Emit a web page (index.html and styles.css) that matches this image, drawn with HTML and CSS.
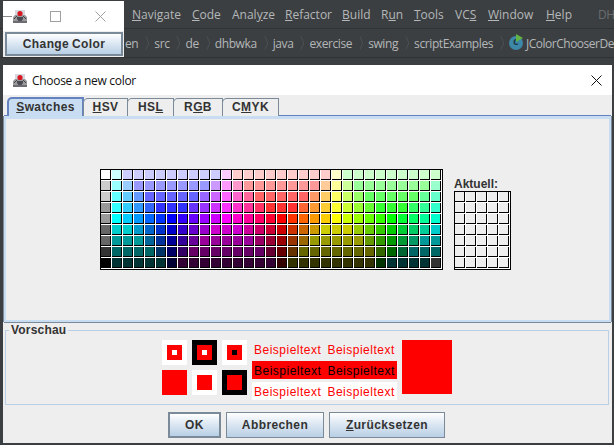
FILE: index.html
```html
<!DOCTYPE html>
<html lang="de">
<head>
    <meta charset="UTF-8">
    <meta name="viewport" content="width=device-width, initial-scale=1.0">
    <title>Choose a new color</title>
    <link rel="stylesheet" href="styles.css">
</head>
<body>

    <!-- IDE behind the windows -->
    <div class="ide">
        <div class="menubar">
            <span class="menu m-navigate"><u>N</u>avigate</span>
            <span class="menu m-code"><u>C</u>ode</span>
            <span class="menu m-analyze">Anal<u>y</u>ze</span>
            <span class="menu m-refactor"><u>R</u>efactor</span>
            <span class="menu m-build"><u>B</u>uild</span>
            <span class="menu m-run">R<u>u</u>n</span>
            <span class="menu m-tools"><u>T</u>ools</span>
            <span class="menu m-vcs">VC<u>S</u></span>
            <span class="menu m-window"><u>W</u>indow</span>
            <span class="menu m-help"><u>H</u>elp</span>
            <span class="menu project">DH</span>
        </div>
        <div class="crumbs">
            <span class="crumb">en</span><span class="chev"></span>
            <span class="crumb">src</span><span class="chev"></span>
            <span class="crumb">de</span><span class="chev"></span>
            <span class="crumb">dhbwka</span><span class="chev"></span>
            <span class="crumb">java</span><span class="chev"></span>
            <span class="crumb">exercise</span><span class="chev"></span>
            <span class="crumb">swing</span><span class="chev"></span>
            <span class="crumb">scriptExamples</span><span class="chev"></span>
            <span class="class-icon"><span class="class-letter">c</span><span class="class-run"></span></span>
            <span class="crumb class-name">JColorChooserDe</span>
        </div>
    </div>

    <!-- small demo window -->
    <div class="window small-window">
        <div class="titlebar small-title">
            <span class="min-line"></span>
            <svg class="java-icon" viewBox="0 0 16 16"><use href="#duke"/></svg>
            <span class="max-box"></span>
            <svg class="close-x gray" viewBox="0 0 11 11"><path d="M0.5 0.5L10.5 10.5M10.5 0.5L0.5 10.5"/></svg>
        </div>
        <div class="small-body">
            <button class="btn change-btn" type="button">Change Color</button>
        </div>
    </div>

    <!-- color chooser dialog -->
    <div class="window dialog">
        <div class="titlebar dialog-title">
            <svg class="java-icon" viewBox="0 0 16 16">
                <g id="duke">
                    <path d="M1 9L4 6H12L15 9V15H1Z" fill="#9a9a9a"/>
                    <path d="M3 2H13V7H3Z" fill="#d8d8e0"/>
                    <path d="M5 9H11V11L9.5 13H6.5L5 11Z" fill="#4a4a52"/>
                    <path d="M1 13H15V15H1Z" fill="#6c6c74"/>
                    <path d="M2 11L5 8M14 11L11 8" stroke="#44444c" fill="none"/>
                    <circle cx="8" cy="5.5" r="2.6" fill="#d81820"/>
                </g>
            </svg>
            <span class="dialog-name">Choose a new color</span>
            <svg class="close-x" viewBox="0 0 11 11"><path d="M0.5 0.5L10.5 10.5M10.5 0.5L0.5 10.5"/></svg>
        </div>

        <div class="tabs">
            <span class="tab active"><u>S</u>watches</span>
            <span class="tab t-hsv"><u>H</u>SV</span>
            <span class="tab t-hsl">HS<u>L</u></span>
            <span class="tab t-rgb">R<u>G</u>B</span>
            <span class="tab t-cmyk">C<u>M</u>YK</span>
        </div>

        <div class="tab-panel">
            <div class="swatch-grid" id="main-swatches"></div>
            <div class="recent">
                <div class="recent-label">Aktuell:</div>
                <div class="swatch-grid recent-grid" id="recent-swatches"></div>
            </div>
        </div>

        <fieldset class="preview">
            <legend>Vorschau</legend>
            <div class="chips">
                <span class="chip white"><span class="ring"><span class="dot white"></span></span></span>
                <span class="chip black"><span class="ring"><span class="dot white"></span></span></span>
                <span class="chip white"><span class="ring"><span class="dot black"></span></span></span>
                <span class="chip red"></span>
                <span class="chip white"><span class="ring"></span></span>
                <span class="chip black"><span class="ring"></span></span>
            </div>
            <div class="samples">
                <div class="sample"><span>Beispieltext</span><span>Beispieltext</span></div>
                <div class="sample on-red"><span>Beispieltext</span><span>Beispieltext</span></div>
                <div class="sample on-white"><span>Beispieltext</span><span>Beispieltext</span></div>
            </div>
            <div class="big-red"></div>
        </fieldset>

        <div class="actions">
            <button class="btn ok-btn" type="button">OK</button>
            <button class="btn cancel-btn" type="button">Abbrechen</button>
            <button class="btn reset-btn" type="button"><u>Z</u>urücksetzen</button>
        </div>
    </div>

    <script src="script.js"></script>
</body>
</html>
```

FILE: styles.css
```css
body {
    margin: 0;
    width: 614px;
    height: 445px;
    overflow: hidden;
    position: relative;
    background-color: #3c3f41;
    font-family: "Liberation Sans", Arial, sans-serif;
}

/* IDE */
.menubar {
    height: 28px;
    position: relative;
    border-bottom: 1px solid #323232;
}

.menu {
    position: absolute;
    top: 6px;
    font-family: "Open Sans", sans-serif;
    font-size: 12px;
    line-height: 18px;
    color: #b4b7b9;
}

.m-navigate { left: 132px; }
.m-code { left: 192px; }
.m-analyze { left: 232px; }
.m-refactor { left: 285px; }
.m-build { left: 342px; }
.m-run { left: 381px; }
.m-tools { left: 414px; }
.m-vcs { left: 455px; }
.m-window { left: 488px; }
.m-help { left: 546px; }
.project { left: 598px; color: #6a6d70; letter-spacing: -0.5px; }

.crumbs {
    height: 28px;
    display: flex;
    align-items: center;
    padding-left: 125px;
    border-bottom: 1px solid #323232;
    font-family: "Open Sans", sans-serif;
    font-size: 12px;
    letter-spacing: -0.4px;
    color: #b4b7b9;
    white-space: nowrap;
}

.chev {
    width: 10px;
    height: 10px;
    box-sizing: border-box;
    margin: 0 3px;
    border-top: 1px solid #55585a;
    border-right: 1px solid #55585a;
    transform: scaleX(0.45) rotate(45deg);
    flex: none;
}

.class-icon {
    width: 14px;
    height: 14px;
    margin-right: 3px;
    border-radius: 50%;
    background-color: #3d87a8;
    position: relative;
    flex: none;
}

.class-letter {
    position: absolute;
    left: 4px;
    top: -3px;
    font-size: 11px;
    font-weight: bold;
    color: #1d3f50;
}

.class-run {
    position: absolute;
    left: 7px;
    top: -2px;
    border-left: 7px solid #62b543;
    border-top: 4px solid transparent;
    border-bottom: 4px solid transparent;
}

.class-name {
    letter-spacing: -0.5px;
}

/* windows */
.window {
    position: absolute;
    background-color: #eeeeee;
}

.titlebar {
    background-color: #fff;
    position: relative;
    display: flex;
    align-items: center;
}

.java-icon {
    width: 16px;
    height: 16px;
    flex: none;
}

.close-x {
    width: 11px;
    height: 11px;
    stroke: #111;
    stroke-width: 1;
    fill: none;
    flex: none;
}

.close-x.gray {
    stroke: #a0a0a0;
}

.small-window {
    left: 3px;
    top: 1px;
    width: 121px;
    height: 56px;
}

.small-title {
    height: 30px;
    padding-left: 9px;
}

.min-line {
    position: absolute;
    left: 0;
    top: 15px;
    width: 9px;
    height: 1px;
    background-color: #888;
}

.max-box {
    width: 9px;
    height: 9px;
    border: 1px solid #a0a0a0;
    margin-left: 22px;
    flex: none;
}

.small-title .close-x {
    margin-left: 34px;
}

.small-body {
    padding: 1px 1px 0 2px;
}

.btn {
    display: block;
    padding: 0;
    font-family: "Liberation Sans", Arial, sans-serif;
    font-size: 12px;
    font-weight: bold;
    letter-spacing: 0.4px;
    color: #333;
    border: 1px solid #7a8a99;
    background: linear-gradient(#ffffff, #dde8f3 45%, #b8cfe5);
}

.change-btn {
    width: 118px;
    height: 24px;
    border: 2px solid #7a8a99;
    word-spacing: -1px;
}

.dialog {
    left: 3px;
    top: 65px;
    width: 609px;
    height: 378px;
}

.dialog-title {
    height: 30px;
    padding: 0 10px 0 9px;
}

.dialog-name {
    font-family: "Open Sans", sans-serif;
    font-size: 12px;
    letter-spacing: -0.3px;
    color: #111;
    margin-left: 4px;
    flex: 1;
}

/* tabs */
.tabs {
    display: flex;
    height: 19px;
    padding: 2px 0 0 4px;
    align-items: flex-end;
}

.tab {
    height: 18px;
    box-sizing: border-box;
    border: 1px solid #7a8a99;
    border-bottom: 0;
    border-radius: 5px 0 0 0;
    margin-right: -1px;
    font-size: 12px;
    font-weight: bold;
    letter-spacing: 0.4px;
    line-height: 16px;
    color: #333;
    text-align: center;
    background: #eeeeee;
}

.tab.active {
    width: 77px;
    height: 19px;
    border: 2px solid #6382bf;
    border-bottom: 0;
    background-color: #c8ddf2;
}

.t-hsv { width: 45px; }
.t-hsl { width: 47px; }
.t-rgb { width: 50px; }
.t-cmyk { width: 57px; }

.tab-panel {
    height: 151px;
    display: flex;
    align-items: flex-end;
    gap: 11px;
    padding: 0 0 50px 94px;
    border: 2px solid #c8ddf2;
    border-top: 3px solid #c8ddf2;
    box-shadow: 0 -1px 0 #6382bf, 1px 0 0 #7a8a99, 0 1px 0 #7a8a99, -1px 0 0 #7a8a99;
    margin: 0 1px;
}

.swatch-grid {
    display: grid;
    grid-template-columns: repeat(31, 10px);
    grid-auto-rows: 10px;
    gap: 1px;
    padding: 0 1px 1px 0;
    background-color: #fff;
    border: 1px solid #000;
}

.recent-grid {
    grid-template-columns: repeat(5, 10px);
}

.cell {
    box-sizing: border-box;
    border-right: 1px solid #000;
    border-bottom: 1px solid #000;
}

.recent-label {
    font-size: 12px;
    font-weight: bold;
    color: #333;
    line-height: 14px;
}

/* preview */
.preview {
    margin: 1px 3px 0 2px;
    padding: 0;
    height: 80px;
    box-sizing: content-box;
    border: 1px solid #b8cfe5;
    display: flex;
    min-width: 0;
}

.preview legend {
    margin-left: 3px;
    padding: 0 2px;
    font-size: 12px;
    font-weight: bold;
    letter-spacing: 0.2px;
    color: #333;
    line-height: 14px;
}

.chips {
    display: grid;
    grid-template-columns: repeat(3, 25px);
    grid-auto-rows: 25px;
    gap: 5px;
    margin: 3px 0 0 156px;
    align-content: start;
}

.chip {
    display: flex;
    align-items: center;
    justify-content: center;
}

.ring {
    width: 15px;
    height: 15px;
    background-color: #f00;
    display: flex;
    align-items: center;
    justify-content: center;
}

.dot {
    width: 5px;
    height: 5px;
}

.white { background-color: #fff; }
.black { background-color: #000; }
.red { background-color: #f00; }

.samples {
    margin: 3px 0 0 5px;
    width: 145px;
}

.sample {
    height: 18px;
    margin-bottom: 3px;
    display: flex;
    gap: 6px;
    padding-left: 2px;
    font-size: 12px;
    letter-spacing: 0.5px;
    line-height: 21px;
    color: #f00;
    white-space: nowrap;
}

.on-red {
    background-color: #f00;
    color: #000;
}

.on-white {
    background-color: #fff;
}

.big-red {
    width: 50px;
    height: 54px;
    margin: 3px 0 0 5px;
    background-color: #f00;
}

/* buttons */
.actions {
    display: flex;
    gap: 5px;
    padding: 7px 0 0 165px;
}

.ok-btn {
    width: 53px;
    height: 26px;
    border: 2px solid #7a8a99;
}

.cancel-btn {
    width: 98px;
    height: 26px;
}

.reset-btn {
    width: 116px;
    height: 26px;
}
```

FILE: script.js
```js
// colors of the swatch panel, one string per row
const rows = [
    "fff cff ccf ccf ccf ccf ccf ccf ccf ccf ccf fcf fcc fcc fcc fcc fcc fcc fcc fcc fcc ffc cfc cfc cfc cfc cfc cfc cfc cfc cfc",
    "ccc 9ff 9cf 99f 99f 99f 99f 99f 99f 99f c9f f9f f9c f99 f99 f99 f99 f99 f99 f99 fc9 ff9 cf9 9f9 9f9 9f9 9f9 9f9 9f9 9f9 9fc",
    "ccc 6ff 6cf 69f 66f 66f 66f 66f 66f 96f c6f f6f f6c f69 f66 f66 f66 f66 f66 f96 fc6 ff6 cf6 9f6 6f6 6f6 6f6 6f6 6f6 6f9 6fc",
    "999 3ff 3cf 39f 36f 33f 33f 33f 63f 93f c3f f3f f3c f39 f36 f33 f33 f33 f63 f93 fc3 ff3 cf3 9f3 6f3 3f3 3f3 3f3 3f6 3f9 3fc",
    "999 0ff 0cf 09f 06f 03f 00f 30f 60f 90f c0f f0f f0c f09 f06 f03 f00 f30 f60 f90 fc0 ff0 cf0 9f0 6f0 3f0 0f0 0f3 0f6 0f9 0fc",
    "666 0cc 0cc 09c 06c 03c 00c 30c 60c 90c c0c c0c c0c c09 c06 c03 c00 c30 c60 c90 cc0 cc0 cc0 9c0 6c0 3c0 0c0 0c3 0c6 0c9 0cc",
    "666 099 099 099 069 039 009 309 609 909 909 909 909 909 906 903 900 930 960 990 990 990 990 990 690 390 090 093 096 099 099",
    "333 066 066 066 066 036 006 306 606 606 606 606 606 606 606 603 600 630 660 660 660 660 660 660 660 360 060 063 066 066 066",
    "000 033 033 033 033 033 003 303 303 303 303 303 303 303 303 303 300 330 330 330 330 330 330 330 330 030 033 033 033 033 333"
];

function addCell(grid, color) {
    const cell = document.createElement("div");
    cell.className = "cell";
    cell.style.backgroundColor = color;
    grid.appendChild(cell);
}

const mainGrid = document.getElementById("main-swatches");
rows.forEach(function (row) {
    row.split(" ").forEach(function (c) {
        addCell(mainGrid, "#" + c);
    });
});

// recent colors are still empty
const recentGrid = document.getElementById("recent-swatches");
for (let i = 0; i < 35; i++) {
    addCell(recentGrid, "#eeeeee");
}
```
